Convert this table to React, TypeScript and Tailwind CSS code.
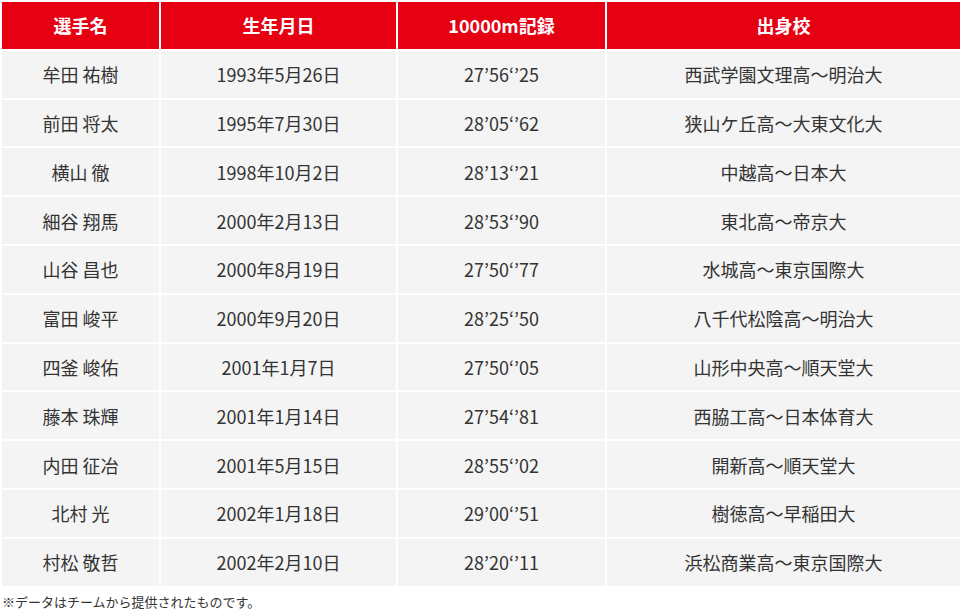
const rows = [
  ['牟田 祐樹', '1993年5月26日', '27’56‘’25', '西武学園文理高〜明治大'],
  ['前田 将太', '1995年7月30日', '28’05‘’62', '狭山ケ丘高〜大東文化大'],
  ['横山 徹', '1998年10月2日', '28’13‘’21', '中越高〜日本大'],
  ['細谷 翔馬', '2000年2月13日', '28’53‘’90', '東北高〜帝京大'],
  ['山谷 昌也', '2000年8月19日', '27’50‘’77', '水城高〜東京国際大'],
  ['富田 峻平', '2000年9月20日', '28’25‘’50', '八千代松陰高〜明治大'],
  ['四釜 峻佑', '2001年1月7日', '27’50‘’05', '山形中央高〜順天堂大'],
  ['藤本 珠輝', '2001年1月14日', '27’54‘’81', '西脇工高〜日本体育大'],
  ['内田 征冶', '2001年5月15日', '28’55‘’02', '開新高〜順天堂大'],
  ['北村 光', '2002年1月18日', '29’00‘’51', '樹徳高〜早稲田大'],
  ['村松 敬哲', '2002年2月10日', '28’20‘’11', '浜松商業高〜東京国際大'],
]

const headers = ['選手名', '生年月日', '10000m記録', '出身校']

export default function App() {
  return (
    <div
      className="w-[960px] h-[612px] overflow-hidden bg-white text-[#333]"
      style={{ fontFamily: '"Noto Sans CJK JP", "Noto Sans", sans-serif' }}
    >
      <table className="w-[962px] border-separate border-spacing-[2px] table-fixed">
        <colgroup>
          <col className="w-[157px]" />
          <col className="w-[235px]" />
          <col className="w-[207px]" />
          <col />
        </colgroup>
        <thead>
          <tr>
            {headers.map((h) => (
              <th
                key={h}
                className="h-[46.8px] bg-[#e60012] text-white font-bold text-[18px] leading-[24px] text-center align-middle p-0"
              >
                {h}
              </th>
            ))}
          </tr>
        </thead>
        <tbody>
          {rows.map((r) => (
            <tr key={r[0]}>
              {r.map((c, i) => (
                <td
                  key={i}
                  className="h-[46.8px] bg-[#f4f4f4] text-[18px] leading-[24px] text-center align-middle p-0"
                >
                  {c}
                </td>
              ))}
            </tr>
          ))}
        </tbody>
      </table>
      <p className="mt-[4px] pl-[2px] text-[13px] leading-[20px]">※データはチームから提供されたものです。</p>
    </div>
  )
}
